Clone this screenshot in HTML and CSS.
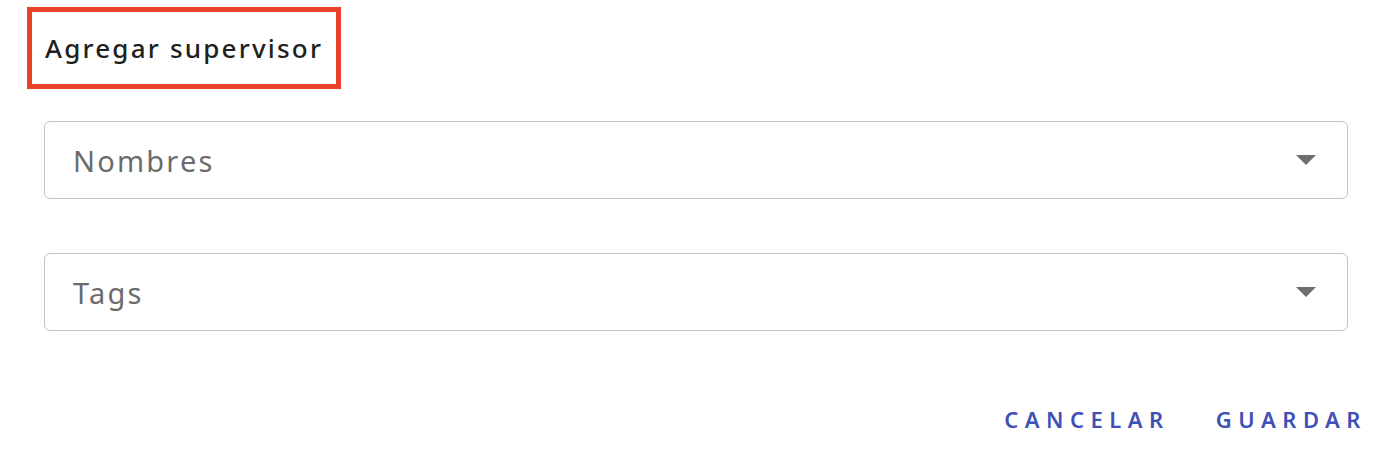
FILE: index.html
```html
<!DOCTYPE html>
<html lang="es">
<head>
  <meta charset="UTF-8" />
  <title>Agregar supervisor</title>
  <link rel="stylesheet" href="styles.css">
</head>
<body>
  <div class="dialog">
    <div class="title-box">
      <h2 class="title">Agregar supervisor</h2>
    </div>
    <div class="fields">
      <div class="select">
        <span class="placeholder">Nombres</span>
        <span class="arrow"></span>
      </div>
      <div class="select">
        <span class="placeholder">Tags</span>
        <span class="arrow"></span>
      </div>
    </div>
    <div class="actions">
      <button class="text-btn">Cancelar</button>
      <button class="text-btn">Guardar</button>
    </div>
  </div>
</body>
</html>
```

FILE: styles.css
```css
body {
  margin: 0;
  padding: 0;
  font-family: "Noto Sans", "Liberation Sans", sans-serif;
  background-color: #fff;
  color: #212121;
}

.dialog {
  width: 1388px;
  height: 462px;
  box-sizing: border-box;
  padding: 7px 0 0 0;
}

.title-box {
  margin-left: 27px;
  width: 314px;
  height: 82px;
  box-sizing: border-box;
  border: 5px solid #e8432a;
  display: flex;
  align-items: center;
  padding-left: 13px;
}

.title {
  margin: 0;
  font-size: 26px;
  font-weight: 500;
  letter-spacing: 2.2px;
  color: #1f1f1f;
}

.fields {
  padding: 32px 40px 0 44px;
  display: flex;
  flex-direction: column;
  gap: 54px;
}

.select {
  height: 78px;
  box-sizing: border-box;
  border: 1.5px solid #c4c4c4;
  border-radius: 6px;
  display: flex;
  align-items: center;
  justify-content: space-between;
  padding: 0 31px 0 28px;
}

.placeholder {
  font-size: 29px;
  letter-spacing: 2.2px;
  color: #6b6b6b;
}

.arrow {
  width: 0;
  height: 0;
  border-left: 10px solid transparent;
  border-right: 10px solid transparent;
  border-top: 10px solid #6e6e6e;
}

.actions {
  display: flex;
  justify-content: flex-end;
  gap: 46px;
  padding: 73px 21px 0 0;
}

.text-btn {
  background: none;
  border: none;
  padding: 0;
  font-family: "Noto Sans", "Liberation Sans", sans-serif;
  font-size: 22px;
  font-weight: 600;
  letter-spacing: 6.5px;
  text-transform: uppercase;
  color: #3f51b5;
  cursor: pointer;
}
```
